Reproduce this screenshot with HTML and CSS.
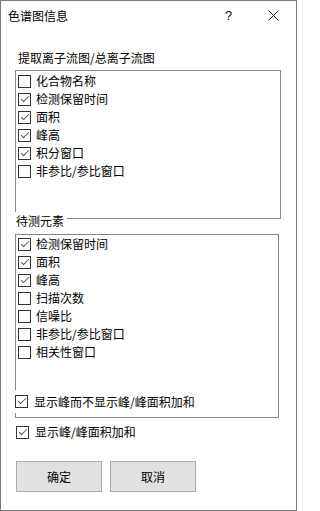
FILE: index.html
```html
<!DOCTYPE html>
<html lang="zh-CN">
<head>
<meta charset="utf-8">
<title>色谱图信息</title>
<link rel="stylesheet" href="styles.css">
</head>
<body>
<div class="win">
  <div class="titlebar">
    <span class="title">色谱图信息</span>
    <span class="cap-btn help">?</span>
    <span class="cap-btn close">
      <svg width="11" height="11" viewBox="0 0 11 11"><path d="M0.5 0.5 L10.5 10.5 M10.5 0.5 L0.5 10.5" stroke="#1a1a1a" stroke-width="1" fill="none"/></svg>
    </span>
  </div>
  <div class="content">
    <div class="label">提取离子流图/总离子流图</div>
    <div class="list list1">
      <div class="row"><span class="box"></span><span>化合物名称</span></div>
      <div class="row"><span class="box checked"></span><span>检测保留时间</span></div>
      <div class="row"><span class="box checked"></span><span>面积</span></div>
      <div class="row"><span class="box checked"></span><span>峰高</span></div>
      <div class="row"><span class="box checked"></span><span>积分窗口</span></div>
      <div class="row"><span class="box"></span><span>非参比/参比窗口</span></div>
    </div>
    <div class="caption">待测元素</div>
    <div class="list list2">
      <div class="row"><span class="box checked"></span><span>检测保留时间</span></div>
      <div class="row"><span class="box checked"></span><span>面积</span></div>
      <div class="row"><span class="box checked"></span><span>峰高</span></div>
      <div class="row"><span class="box"></span><span>扫描次数</span></div>
      <div class="row"><span class="box"></span><span>信噪比</span></div>
      <div class="row"><span class="box"></span><span>非参比/参比窗口</span></div>
      <div class="row"><span class="box"></span><span>相关性窗口</span></div>
      <div class="chk overlay"><span class="box checked"></span><span>显示峰而不显示峰/峰面积加和</span></div>
    </div>
    <div class="chk standalone"><span class="box checked"></span><span>显示峰/峰面积加和</span></div>
    <div class="buttons">
      <div class="btn">确定</div>
      <div class="btn">取消</div>
    </div>
  </div>
</div>
</body>
</html>
```

FILE: styles.css
```css
html, body {
  margin: 0;
  padding: 0;
  background: #ffffff;
}
body {
  font-family: "Noto Sans CJK SC", "Noto Sans", sans-serif;
  font-size: 12px;
  color: #000;
}
.win {
  width: 297px;
  height: 511px;
  box-sizing: border-box;
  border: 1px solid #7a7a7a;
  background: #fff;
}
.titlebar {
  height: 29px;
  display: flex;
  align-items: center;
}
.title {
  flex: 1;
  padding-left: 7px;
  line-height: 16px;
}
.cap-btn {
  width: 45px;
  height: 29px;
  display: flex;
  align-items: center;
  justify-content: center;
}
.help {
  font-family: "Liberation Sans", sans-serif;
  font-size: 13px;
  color: #111;
}
.content {
  padding-left: 14px;
}
.label {
  margin-top: 20px;
  padding-left: 3px;
  line-height: 16px;
  height: 16px;
}
.list {
  box-sizing: border-box;
  border: 1px solid #828790;
  background: #fff;
  position: relative;
}
.list1 {
  margin-top: 4px;
  width: 266px;
  height: 149px;
  padding-top: 1px;
}
.list2 {
  margin-top: 4px;
  width: 264px;
  height: 184px;
}
.row {
  height: 18px;
  display: flex;
  align-items: center;
  padding-left: 2px;
  line-height: 18px;
}
.box {
  width: 13px;
  height: 13px;
  box-sizing: border-box;
  border: 1px solid #333;
  background: #fff;
  margin-right: 5px;
  flex: none;
  position: relative;
}
.box.checked::after {
  content: "";
  position: absolute;
  left: 3px;
  top: 0px;
  width: 3px;
  height: 7px;
  border-right: 1px solid #555;
  border-bottom: 1px solid #555;
  transform: translate(1px, 0px) rotate(45deg);
  transform-origin: center;
}
.caption {
  position: relative;
  margin-top: -7px;
  display: block;
  width: max-content;
  background: #fff;
  padding-left: 2px;
  padding-right: 3px;
  line-height: 18px;
  height: 18px;
  margin-left: -1px;
}
.chk {
  display: flex;
  align-items: center;
  line-height: 18px;
}
.chk .box {
  margin-right: 6px;
}
.overlay {
  position: absolute;
  left: -1px;
  top: 155px;
  height: 23px;
  background: #fff;
  padding-right: 4px;
}
.standalone {
  margin-top: 5px;
  height: 18px;
  margin-left: 1px;
}
.buttons {
  margin-top: 20px;
  display: flex;
  gap: 8px;
  padding-left: 1px;
}
.btn {
  width: 86px;
  height: 31px;
  box-sizing: border-box;
  border: 1px solid #adadad;
  background: #e1e1e1;
  display: flex;
  align-items: center;
  justify-content: center;
}
```
